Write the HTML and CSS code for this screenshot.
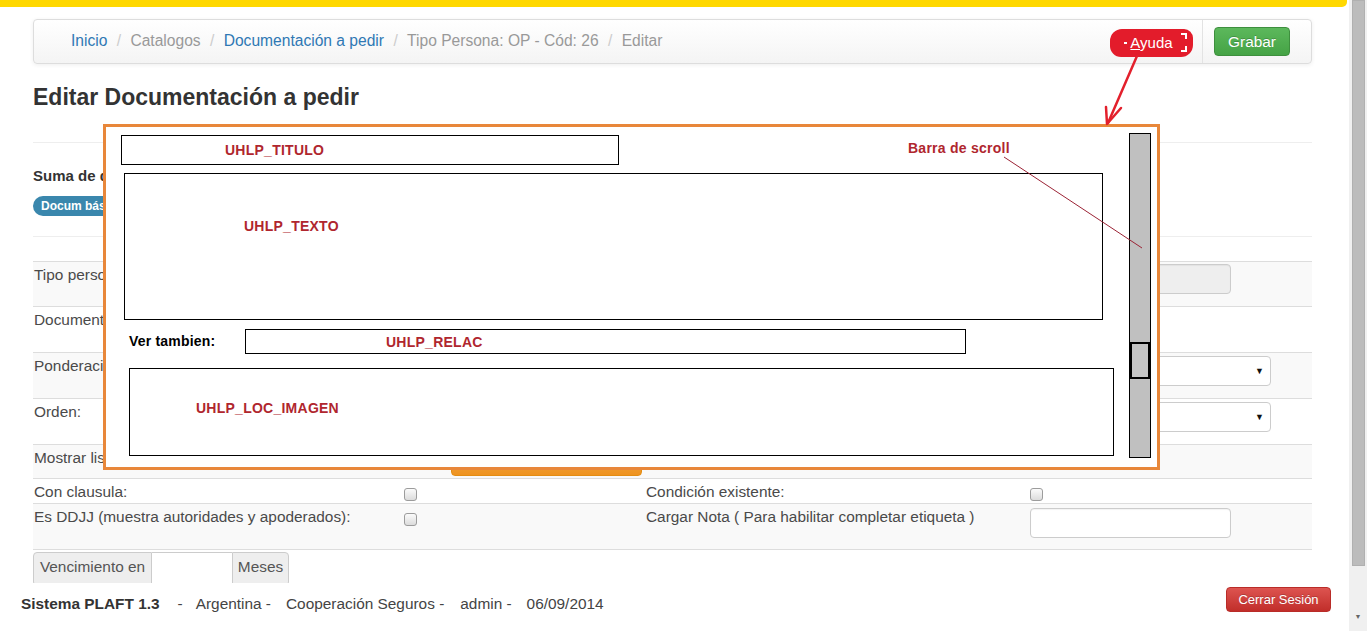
FILE: index.html
```html
<!DOCTYPE html>
<html lang="es">
<head>
<meta charset="utf-8">
<title>Editar Documentación a pedir</title>
<link rel="stylesheet" href="styles.css">
</head>
<body>
<div class="viewport">
  <div class="topbar"></div>
  <div class="page">
    <nav class="navbar">
      <ol class="breadcrumb">
        <li><a href="#">Inicio</a></li>
        <li>Catalogos</li>
        <li><a href="#">Documentación a pedir</a></li>
        <li>Tipo Persona: OP - Cód: 26</li>
        <li>Editar</li>
      </ol>
      <div class="nav-actions">
        <span class="ayuda"><u>A</u>yuda</span>
        <span class="divider"></span>
        <button class="btn btn-success">Grabar</button>
      </div>
    </nav>

    <h1>Editar Documentación a pedir</h1>
    <hr class="sep sep-1">

    <div class="summary">
      <h4>Suma de documentos</h4>
      <span class="badge">Docum básica</span>
    </div>
    <hr class="sep sep-2">

    <div class="form-table">
      <div class="row h45 striped">
        <div class="cell">Tipo persona:</div>
        <div class="cell"></div>
        <div class="cell"></div>
        <div class="cell"><input class="fc fc-disabled up2" disabled></div>
      </div>
      <div class="row h46">
        <div class="cell">Documentación:</div>
        <div class="cell"></div>
        <div class="cell"></div>
        <div class="cell"></div>
      </div>
      <div class="row h46 striped">
        <div class="cell">Ponderación:</div>
        <div class="cell"></div>
        <div class="cell"></div>
        <div class="cell"><div class="select"><span class="caret">▼</span></div></div>
      </div>
      <div class="row h46">
        <div class="cell">Orden:</div>
        <div class="cell"></div>
        <div class="cell"></div>
        <div class="cell"><div class="select"><span class="caret">▼</span></div></div>
      </div>
      <div class="row h34 striped">
        <div class="cell">Mostrar lista:</div>
        <div class="cell"><button class="btn btn-warning">Ver lista</button></div>
        <div class="cell"></div>
        <div class="cell"></div>
      </div>
      <div class="row h25">
        <div class="cell">Con clausula:</div>
        <div class="cell"><input type="checkbox" class="chk"></div>
        <div class="cell">Condición existente:</div>
        <div class="cell"><input type="checkbox" class="chk"></div>
      </div>
      <div class="row h47 striped last">
        <div class="cell">Es DDJJ (muestra autoridades y apoderados):</div>
        <div class="cell"><input type="checkbox" class="chk"></div>
        <div class="cell">Cargar Nota ( Para habilitar completar etiqueta )</div>
        <div class="cell"><input class="fc"></div>
      </div>
    </div>

    <div class="input-group">
      <span class="addon addon-first">Vencimiento en</span>
      <input class="ig-input">
      <span class="addon addon-last">Meses</span>
    </div>
  </div>

  <footer class="footer">
    <div class="footer-info">
      <b>Sistema PLAFT 1.3</b>
      <span class="f1">-</span>
      <span class="f2">Argentina -</span>
      <span class="f3">Cooperación Seguros -</span>
      <span class="f4">admin -</span>
      <span class="f5">06/09/2014</span>
    </div>
    <button class="btn btn-danger">Cerrar Sesión</button>
  </footer>
</div>

<div class="scrollbar">
  <div class="sb-thumb"></div>
  <span class="sb-arrow">▼</span>
</div>

<div class="help-mock">
  <div class="hm-box hm-titulo"><span class="hm-red">UHLP_TITULO</span></div>
  <div class="hm-box hm-texto"><span class="hm-red">UHLP_TEXTO</span></div>
  <div class="hm-ver">Ver tambien:</div>
  <div class="hm-box hm-relac"><span class="hm-red">UHLP_RELAC</span></div>
  <div class="hm-box hm-img"><span class="hm-red">UHLP_LOC_IMAGEN</span></div>
  <div class="hm-label hm-red">Barra de scroll</div>
  <div class="hm-vscroll"><div class="hm-thumb"></div></div>
</div>

<svg class="annotations" width="1367" height="631" viewBox="0 0 1367 631" aria-hidden="true">
  <path d="M1137 56 L1108 123" stroke="#e3202c" stroke-width="2.5" fill="none" stroke-linecap="round"/>
  <path d="M1106 107 L1107 124 L1121 108" stroke="#e3202c" stroke-width="2.5" fill="none" stroke-linecap="round" stroke-linejoin="round"/>
  <path d="M1004 157 L1142 248" stroke="#9b2335" stroke-width="1" fill="none"/>
</svg>
</body>
</html>
```
FILE: styles.css
```css
* { box-sizing: border-box; }

html, body {
  margin: 0;
  padding: 0;
  height: 631px;
  overflow: hidden;
}

body {
  position: relative;
  display: flex;
  width: 1367px;
  font-family: "Liberation Sans", Arial, sans-serif;
  font-size: 15.4px;
  color: #4a4a4a;
  background: #fff;
}

.viewport {
  width: 1349px;
  height: 631px;
  display: flex;
  flex-direction: column;
}

.topbar {
  flex: 0 0 7px;
  width: 1347px;
  background: #ffd800;
  border-bottom-right-radius: 5px;
}

.page {
  flex: 1 1 auto;
  overflow: hidden;
  padding: 12px 37px 0 33px;
}

/* navbar / breadcrumb */
.navbar {
  height: 45px;
  display: flex;
  align-items: center;
  justify-content: space-between;
  border: 1px solid #ddd;
  border-radius: 4px;
  background: linear-gradient(#ffffff, #f4f4f4);
  box-shadow: 0 1px 4px rgba(0, 0, 0, 0.07);
  padding: 0 21px 0 37px;
}

.breadcrumb {
  list-style: none;
  margin: 0 0 2px;
  padding: 0;
  color: #999;
  font-size: 15.6px;
  line-height: 20px;
}

.breadcrumb li { display: inline-block; }

.breadcrumb li + li::before {
  content: "/\00a0";
  padding: 0 5px;
  color: #ccc;
}

.breadcrumb a {
  color: #2f78b4;
  text-decoration: none;
}

.nav-actions {
  display: flex;
  align-items: center;
  height: 100%;
}

.ayuda {
  position: relative;
  width: 83px;
  height: 28px;
  margin-top: 3px;
  margin-right: 9px;
  background: #e31c2b;
  border-radius: 12px 9px 12px 11px;
  color: #fff;
  font-size: 15px;
  line-height: 28px;
  text-align: center;
}

.ayuda u { text-decoration-thickness: 1px; }

.ayuda::before {
  content: "";
  position: absolute;
  left: 14px;
  top: 13px;
  width: 3px;
  height: 2px;
  background: #fff;
}

.ayuda::after {
  content: "";
  position: absolute;
  right: 6px;
  top: 4px;
  width: 6px;
  height: 19px;
  background:
    linear-gradient(#fff, #fff) left top / 6px 2px no-repeat,
    linear-gradient(#fff, #fff) right top / 2px 6px no-repeat,
    linear-gradient(#fff, #fff) left bottom / 6px 2px no-repeat,
    linear-gradient(#fff, #fff) right bottom / 2px 6px no-repeat;
}

.divider {
  align-self: stretch;
  width: 1px;
  margin-right: 11px;
  background: #e3e3e3;
}

.btn {
  font-family: "Liberation Sans", Arial, sans-serif;
  color: #fff;
  border-radius: 4px;
  padding: 0;
  cursor: pointer;
  text-shadow: 0 -1px 0 rgba(0, 0, 0, 0.2);
}

.btn-success {
  width: 76px;
  height: 29px;
  font-size: 15.4px;
  background: linear-gradient(#5cb85c, #45a345);
  border: 1px solid #3e8f3e;
}

.btn-danger {
  width: 105px;
  height: 25px;
  font-size: 13px;
  background: linear-gradient(#dd5450, #c12e2a);
  border: 1px solid #b92c28;
  margin-top: 4px;
  margin-right: 18px;
}

.btn-warning {
  display: block;
  width: 191px;
  height: 28px;
  margin-left: 47px;
  font-size: 14px;
  background: linear-gradient(#f0ad4e, #ef9320);
  border: 1px solid #e38d13;
}

/* heading */
h1 {
  margin: 20px 0 0;
  font-size: 23px;
  line-height: 26px;
  font-weight: bold;
  color: #333;
}

.sep {
  border: 0;
  border-top: 1px solid #eee;
  margin: 0;
  height: 0;
}

.sep-1 { margin-top: 32px; }

.summary {
  display: flex;
  flex-direction: column;
  align-items: flex-start;
}

.summary h4 {
  margin: 23px 0 0;
  font-size: 15px;
  line-height: 20px;
  font-weight: bold;
  color: #333;
}

.badge {
  margin-top: 10px;
  height: 20px;
  padding: 0 8px;
  line-height: 20px;
  font-size: 12px;
  font-weight: bold;
  color: #fff;
  background: #3a87ad;
  border-radius: 10px;
}

.sep-2 { margin-top: 20px; }

/* form table */
.form-table { margin-top: 24px; }

.row {
  display: grid;
  grid-template-columns: 370px 242px 384px 1fr;
  border-top: 1px solid #ddd;
}

.row.striped { background: #f9f9f9; }
.row.last { border-bottom: 1px solid #ddd; }

.h45 { height: 45px; }
.h46 { height: 46px; }
.h34 { height: 34px; }
.h25 { height: 25px; }
.h47 { height: 47px; }

.cell {
  padding: 3px 0 0 1px;
  line-height: 20px;
  white-space: nowrap;
}

.chk {
  appearance: none;
  -webkit-appearance: none;
  display: block;
  width: 13px;
  height: 13px;
  margin: 6px 0 0;
  border: 1px solid #9c9c9c;
  border-radius: 3px;
  background: linear-gradient(#fbfbfb, #dcdcdc);
}

.fc {
  display: block;
  width: 201px;
  height: 30px;
  margin: 1px 0 0;
  border: 1px solid #ccc;
  border-radius: 4px;
  background: #fff;
  box-shadow: inset 0 1px 1px rgba(0, 0, 0, 0.05);
}

.fc-disabled { background: #eee; }
.up2 { margin-top: -1px; }

.select {
  width: 241px;
  height: 30px;
  border: 1px solid #ccc;
  border-radius: 4px;
  background: #fff;
  display: flex;
  align-items: center;
  justify-content: flex-end;
  padding-right: 6px;
}

.caret {
  font-size: 9px;
  color: #111;
}

/* input group */
.input-group {
  display: flex;
  margin-top: 2px;
  height: 34px;
}

.addon {
  height: 34px;
  padding-top: 4px;
  line-height: 20px;
  background: #eee;
  border: 1px solid #ccc;
  color: #555;
  font-size: 15.4px;
  text-align: center;
}

.addon-first { width: 119px; border-radius: 4px 0 0 4px; }
.addon-last { width: 57px; border-radius: 0 4px 4px 0; }

.ig-input {
  width: 80px;
  height: 34px;
  border: 1px solid #ccc;
  border-left: 0;
  border-right: 0;
  background: #fff;
}

/* footer */
.footer {
  flex: 0 0 48px;
  display: flex;
  justify-content: space-between;
  align-items: flex-start;
  background: #fff;
}

.footer-info {
  display: flex;
  padding-left: 21px;
  margin-top: 11px;
  line-height: 20px;
  font-size: 15.4px;
  color: #444;
  white-space: nowrap;
}

.footer-info b { color: #333; }
.f1 { margin-left: 18px; }
.f2 { margin-left: 13px; }
.f3 { margin-left: 15px; }
.f4 { margin-left: 16px; }
.f5 { margin-left: 15px; }

/* fake window scrollbar */
.scrollbar {
  width: 18px;
  height: 631px;
  background: #f0f0f0;
  display: flex;
  flex-direction: column;
  align-items: center;
}

.sb-thumb {
  width: 13px;
  height: 566px;
  background: #bcbcbc;
  border: 1px solid #b0b0b0;
}

.sb-arrow {
  margin-top: 47px;
  font-size: 7px;
  color: #666;
}

/* help window mock-up (annotated diagram) */
.help-mock {
  position: absolute;
  left: 103px;
  top: 124px;
  width: 1057px;
  height: 346px;
  border: 3px solid #e8873a;
  background: #fff;
  font-family: "Liberation Sans", Arial, sans-serif;
}

.hm-box {
  position: absolute;
  border: 1px solid #000;
  background: #fff;
}

.hm-red {
  color: #b0262e;
  font-weight: bold;
  font-size: 14px;
  line-height: 16px;
  letter-spacing: 0.25px;
}

.hm-titulo {
  left: 15px;
  top: 8px;
  width: 498px;
  height: 30px;
  display: flex;
  align-items: center;
  padding-left: 103px;
}

.hm-texto {
  left: 18px;
  top: 46px;
  width: 979px;
  height: 147px;
  padding: 43px 0 0 119px;
}

.hm-ver {
  position: absolute;
  left: 23px;
  top: 206px;
  font-size: 14px;
  line-height: 16px;
  font-weight: bold;
  color: #000;
  letter-spacing: 0.2px;
}

.hm-relac {
  left: 139px;
  top: 202px;
  width: 721px;
  height: 25px;
  display: flex;
  align-items: center;
  padding-left: 140px;
}

.hm-img {
  left: 23px;
  top: 241px;
  width: 985px;
  height: 88px;
  padding: 30px 0 0 66px;
}

.hm-label {
  position: absolute;
  left: 802px;
  top: 13px;
}

.hm-vscroll {
  position: absolute;
  left: 1023px;
  top: 6px;
  width: 22px;
  height: 325px;
  background: #c0c0c0;
  border: 1px solid #000;
  padding-top: 208px;
}

.hm-thumb {
  width: 20px;
  height: 37px;
  border: 2px solid #000;
  background: #c4c4c4;
}

.annotations {
  position: absolute;
  left: 0;
  top: 0;
  pointer-events: none;
}
```
